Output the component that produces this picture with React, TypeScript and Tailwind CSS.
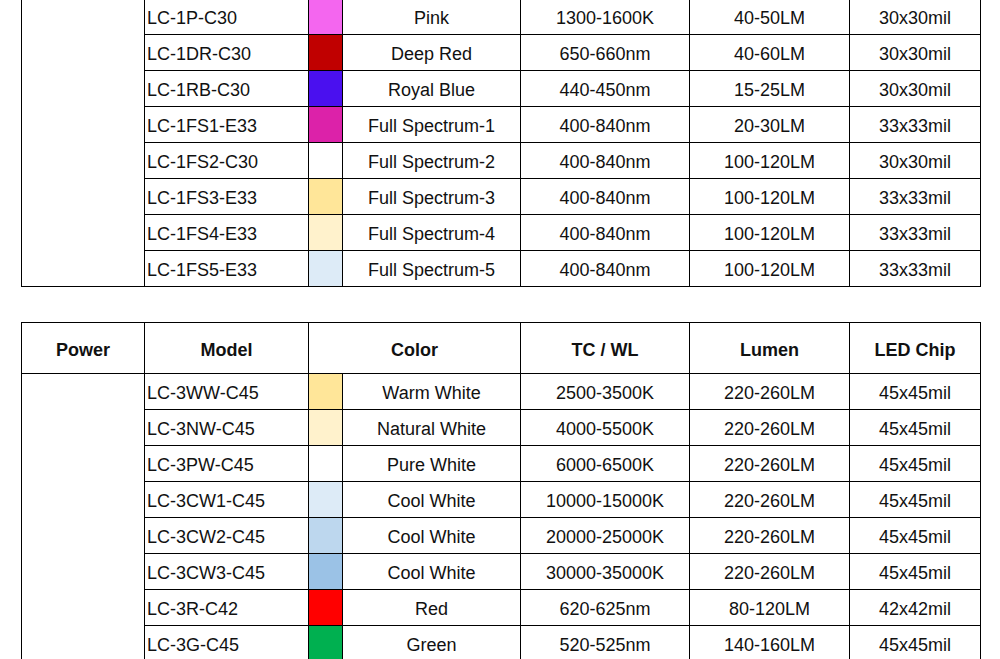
import React from "react";

type Row = { model: string; color: string; name: string; tc: string; lm: string; chip: string };

const table1: Row[] = [
  { model: "LC-1P-C30", color: "#F466EF", name: "Pink", tc: "1300-1600K", lm: "40-50LM", chip: "30x30mil" },
  { model: "LC-1DR-C30", color: "#C00000", name: "Deep Red", tc: "650-660nm", lm: "40-60LM", chip: "30x30mil" },
  { model: "LC-1RB-C30", color: "#4A10EF", name: "Royal Blue", tc: "440-450nm", lm: "15-25LM", chip: "30x30mil" },
  { model: "LC-1FS1-E33", color: "#DC22A9", name: "Full Spectrum-1", tc: "400-840nm", lm: "20-30LM", chip: "33x33mil" },
  { model: "LC-1FS2-C30", color: "#FFFFFF", name: "Full Spectrum-2", tc: "400-840nm", lm: "100-120LM", chip: "30x30mil" },
  { model: "LC-1FS3-E33", color: "#FFE699", name: "Full Spectrum-3", tc: "400-840nm", lm: "100-120LM", chip: "33x33mil" },
  { model: "LC-1FS4-E33", color: "#FFF2CC", name: "Full Spectrum-4", tc: "400-840nm", lm: "100-120LM", chip: "33x33mil" },
  { model: "LC-1FS5-E33", color: "#DDEBF7", name: "Full Spectrum-5", tc: "400-840nm", lm: "100-120LM", chip: "33x33mil" },
];

const table2: Row[] = [
  { model: "LC-3WW-C45", color: "#FFE699", name: "Warm White", tc: "2500-3500K", lm: "220-260LM", chip: "45x45mil" },
  { model: "LC-3NW-C45", color: "#FFF2CC", name: "Natural White", tc: "4000-5500K", lm: "220-260LM", chip: "45x45mil" },
  { model: "LC-3PW-C45", color: "#FFFFFF", name: "Pure White", tc: "6000-6500K", lm: "220-260LM", chip: "45x45mil" },
  { model: "LC-3CW1-C45", color: "#DDEBF7", name: "Cool White", tc: "10000-15000K", lm: "220-260LM", chip: "45x45mil" },
  { model: "LC-3CW2-C45", color: "#BDD7EE", name: "Cool White", tc: "20000-25000K", lm: "220-260LM", chip: "45x45mil" },
  { model: "LC-3CW3-C45", color: "#9BC2E6", name: "Cool White", tc: "30000-35000K", lm: "220-260LM", chip: "45x45mil" },
  { model: "LC-3R-C42", color: "#FF0000", name: "Red", tc: "620-625nm", lm: "80-120LM", chip: "42x42mil" },
  { model: "LC-3G-C45", color: "#00B050", name: "Green", tc: "520-525nm", lm: "140-160LM", chip: "45x45mil" },
];

const cell = "border-r border-b border-black flex items-center pt-[3px]";

function Rows({ rows }: { rows: Row[] }) {
  return (
    <>
      {rows.map((r) => (
        <React.Fragment key={r.model}>
          <div className={`${cell} pl-[2px]`}>{r.model}</div>
          <div className="border-r border-b border-black" style={{ backgroundColor: r.color }} />
          <div className={`${cell} justify-center`}>{r.name}</div>
          <div className={`${cell} justify-center`}>{r.tc}</div>
          <div className={`${cell} justify-center`}>{r.lm}</div>
          <div className={`${cell} justify-center`}>{r.chip}</div>
        </React.Fragment>
      ))}
    </>
  );
}

export default function App() {
  return (
    <div
      className="w-[1000px] min-h-[659px] bg-white text-[18px] leading-none text-[#111]"
      style={{ fontFamily: '"Liberation Sans", Arial, sans-serif' }}
    >
      <div className="ml-[21px] -mt-px w-[960px] grid grid-cols-[123px_164px_34px_178px_169px_160px_131px] auto-rows-[36px] border-l border-black">
        <div className="row-span-8 border-r border-b border-black" />
        <Rows rows={table1} />
      </div>

      <div className="ml-[21px] mt-[35px] w-[960px] grid grid-cols-[123px_164px_34px_178px_169px_160px_131px] grid-rows-[51px] auto-rows-[36px] border-l border-t border-black">
        <div className={`${cell} justify-center font-bold`}>Power</div>
        <div className={`${cell} justify-center font-bold`}>Model</div>
        <div className={`${cell} col-span-2 justify-center font-bold`}>Color</div>
        <div className={`${cell} justify-center font-bold`}>TC / WL</div>
        <div className={`${cell} justify-center font-bold`}>Lumen</div>
        <div className={`${cell} justify-center font-bold`}>LED Chip</div>
        <div className="row-span-8 border-r border-b border-black" />
        <Rows rows={table2} />
      </div>
    </div>
  );
}
